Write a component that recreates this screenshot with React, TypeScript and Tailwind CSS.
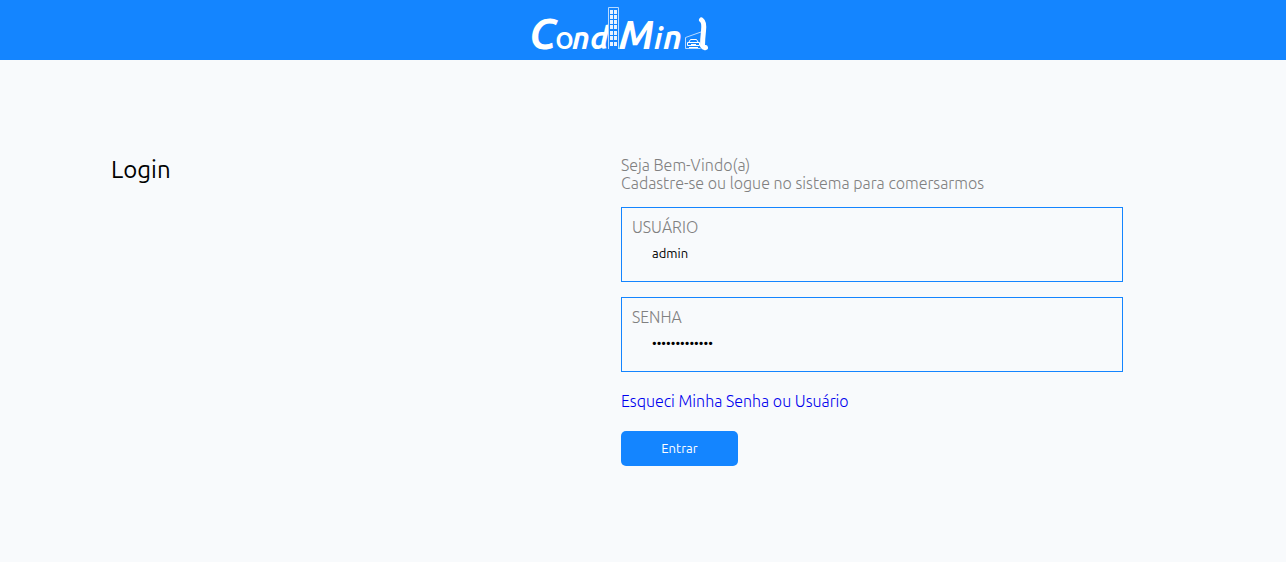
import { useState } from "react";

function Logo() {
  return (
    <svg width="192" height="56" viewBox="524 4 192 56" role="img" aria-label="CondMind" fill="#fff">
      <g fontFamily="Ubuntu, 'Noto Sans', sans-serif" fontWeight="700" fill="#fff">
        <text x="529" y="49" fontSize="43" fontStyle="italic">C</text>
        <text x="555" y="49" fontSize="32" fontWeight="500">o</text>
        <text x="572" y="49" fontSize="31" fontStyle="italic">n</text>
        <text x="590" y="49" fontSize="32" fontStyle="italic">d</text>
        <text x="619" y="49" fontSize="40" fontStyle="italic">M</text>
        <text x="654" y="49" fontSize="29" fontStyle="italic">i</text>
        <text x="663" y="49" fontSize="33" fontStyle="italic">n</text>
      </g>
      <path d="M608 7h11v43h-11z" fill="#1485ff" />
      <path d="M608.5 49V7.5h10V49" fill="none" stroke="#b9dbff" strokeWidth="1" />
      {[10, 15, 20, 25, 31, 36, 42].map((y) => (
        <g key={y} fill="#e8f3ff">
          <rect x="610" y={y} width="3" height="4" />
          <rect x="614" y={y} width="3" height="4" />
        </g>
      ))}
      <g fill="none" stroke="#b9dbff" strokeWidth="1">
        <path d="M685.5 48.500V37.500L701 32M685.500 48.500h15" />
        <path d="M689 42l1.500-2.500h6l1.500 2.500" stroke="#fff" />
        <path d="M687.500 42.500h12v3h-12zM689 47.500h9M691 44.500h5" stroke="#fff" />
      </g>
      <path d="M701.500 20Q704.500 22 703.500 31T702.500 46Q703.500 48 705.500 47.500" fill="none" stroke="#fff" strokeWidth="5" strokeLinecap="round" strokeLinejoin="round" />
    </svg>
  );
}

type FieldProps = {
  id: string;
  label: string;
  type: string;
  value: string;
  onChange: (value: string) => void;
};

function Field({ id, label, type, value, onChange }: FieldProps) {
  return (
    <div className="mb-[15px] h-[75px] border border-[#1485ff] px-[10px] pt-[10px]">
      <label htmlFor={id} className="block leading-[18px] text-[#808080]">
        {label}
      </label>
      <input
        id={id}
        type={type}
        value={value}
        onChange={(event) => onChange(event.target.value)}
        className="block h-[34px] w-full bg-transparent px-5 text-[13px] font-normal text-black outline-none"
      />
    </div>
  );
}

export default function App() {
  const [user, setUser] = useState("admin");
  const [password, setPassword] = useState("administrador");

  return (
    <div className="min-h-screen bg-[#f8fafc] font-['Ubuntu','Noto_Sans',sans-serif] text-base font-light">
      <header className="flex h-[60px] justify-center bg-[#1485ff] pt-1 pr-[46px]">
        <Logo />
      </header>
      <main className="grid grid-cols-2 gap-2 pt-24 pr-[163px] pl-[111px]">
        <h1 className="text-2xl leading-7 font-normal text-black">Login</h1>
        <form onSubmit={(event) => event.preventDefault()}>
          <p className="mb-[15px] leading-[18px] text-[#808080]">
            Seja Bem-Vindo(a)
            <br />
            Cadastre-se ou logue no sistema para comersarmos
          </p>
          <Field id="usuario" label="USUÁRIO" type="text" value={user} onChange={setUser} />
          <Field id="senha" label="SENHA" type="password" value={password} onChange={setPassword} />
          <a href="#recuperar" className="mt-5 block leading-[19px] text-[#0000ee]">
            Esqueci Minha Senha ou Usuário
          </a>
          <button
            type="submit"
            className="mt-5 h-[35px] w-[117px] cursor-pointer rounded-[5px] bg-[#1485ff] text-[13px] font-normal text-white"
          >
            Entrar
          </button>
        </form>
      </main>
    </div>
  );
}
